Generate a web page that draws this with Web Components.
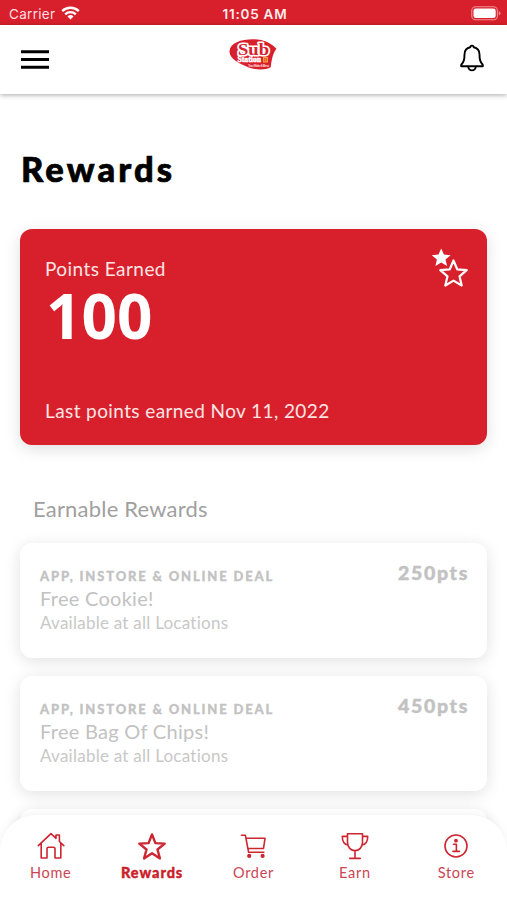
<!DOCTYPE html>
<html lang="en">
<head>
<meta charset="utf-8">
<title>Rewards</title>
<style>
    html, body {
        margin: 0;
        height: 100%;
        overflow: hidden;
        background: #fff;
    }

    body {
        font-family: Lato, "Open Sans", sans-serif;
        --brand: #d8202c;
    }
</style>
</head>
<body>
<rewards-app>
    <status-bar slot="top" carrier="Carrier" time="11:05 AM"></status-bar>
    <app-header slot="top"></app-header>

    <points-card label="Points Earned" points="100">Last points earned Nov 11, 2022</points-card>
    <reward-list heading="Earnable Rewards">
        <reward-card kind="APP, INSTORE &amp; ONLINE DEAL" name="Free Cookie!" cost="250pts">Available at all Locations</reward-card>
        <reward-card kind="APP, INSTORE &amp; ONLINE DEAL" name="Free Bag Of Chips!" cost="450pts">Available at all Locations</reward-card>
        <reward-card></reward-card>
    </reward-list>

    <tab-bar slot="bottom">
        <tab-item icon="home">Home</tab-item>
        <tab-item icon="star" active>Rewards</tab-item>
        <tab-item icon="cart">Order</tab-item>
        <tab-item icon="trophy">Earn</tab-item>
        <tab-item icon="info">Store</tab-item>
    </tab-bar>
</rewards-app>

<script>
const icons = {
    home: `<path d="M1.3 13.6 14 1.6l5 4.7V3h3.4v6.5l4.4 4.1M4.2 11v15h5.8v-9.2q0-1.6 1.6-1.6h4.8q1.6 0 1.6 1.6V26h5.8V11"/>`,
    star: `<path stroke-width="2.4" d="m14 2.4 3.4 8.7 9.3.5-7.2 5.9 2.4 8.9L14 21.3l-7.9 5.1 2.4-8.9-7.2-5.9 9.3-.5z"/>`,
    cart: `<path d="M2.400 3.300h4l3.200 17h15.200M7.100 6.300h18.900l-1.500 10.200H8.900"/><circle cx="10.200" cy="23.900" r="1.300" fill="currentColor"/><circle cx="23.600" cy="23.900" r="1.300" fill="currentColor"/>`,
    trophy: `<path d="M6.5 1.8h15v8.4c0 5.2-3.4 8.400-7.5 8.400s-7.5-3.200-7.5-8.400zM6.5 4.400H1.300c0 5 1.800 7.900 5.800 8.600M21.500 4.400h5.200c0 5-1.800 7.900-5.800 8.600M14 18.600v7.600M8.800 26.400h10.400"/>`,
    info: `<circle cx="14" cy="14" r="11"/><path d="M11.5 12.2h2.9v7M10.9 19.4h6.6"/><circle cx="14" cy="8.7" r="1.1" fill="currentColor"/>`,
};

function attach(element, html) {
    const template = document.createElement('template');
    template.innerHTML = html;
    element.attachShadow({ mode: 'open' }).appendChild(template.content.cloneNode(true));
}

class RewardsApp extends HTMLElement {
    constructor() {
        super();
        attach(this, `
            <style>
                :host {
                    position: relative;
                    display: flex;
                    flex-direction: column;
                    height: 900px;
                    overflow: hidden;
                }

                main {
                    flex: 1;
                    min-height: 0;
                    padding: 50px 20px 0;
                }

                h1 {
                    margin: 0 0 35px 1px;
                    font-size: 34.5px;
                    line-height: 50px;
                    font-weight: 900;
                    letter-spacing: 3.1px;
                    color: #000;
                    -webkit-text-stroke: .7px #000;
                }
            </style>
            <slot name="top"></slot>
            <main>
                <h1>Rewards</h1>
                <slot></slot>
            </main>
            <slot name="bottom"></slot>
        `);
    }
}

class StatusBar extends HTMLElement {
    constructor() {
        super();
        attach(this, `
            <style>
                :host {
                    display: grid;
                    grid-template-columns: 1fr auto 1fr;
                    align-items: center;
                    flex: none;
                    box-sizing: border-box;
                    height: 25px;
                    padding: 2px 6px 0 9px;
                    background: var(--brand);
                    color: #fff;
                    font: 13.5px/22px Inter, sans-serif;
                }

                .carrier {
                    display: flex;
                    align-items: center;
                    gap: 6px;
                    color: #ffdfe0;
                    letter-spacing: .3px;
                }

                .carrier svg {
                    margin-top: -2px;
                }

                .time {
                    font-size: 13.5px;
                    font-weight: 600;
                    letter-spacing: .75px;
                    color: #ffecec;
                }

                .battery {
                    justify-self: end;
                }

                svg {
                    display: block;
                }
            </style>
            <div class="carrier">
                <span id="carrier"></span>
                <svg width="19" height="14" viewBox="0 0 19 14" fill="none" stroke="#fff" stroke-width="2.4">
                    <path d="M1.2 5.2a11.8 11.8 0 0 1 16.6 0M4.2 8.3a7.6 7.6 0 0 1 10.6 0"/>
                    <path d="m9.5 13.6-3-3.1a4.3 4.3 0 0 1 6 0z" fill="#fff" stroke="none"/>
                </svg>
            </div>
            <span class="time" id="time"></span>
            <svg class="battery" width="30" height="15" viewBox="0 0 30 15">
                <rect x=".8" y=".8" width="25.6" height="13" rx="3.8" fill="none" stroke="#ef8f94" stroke-width="1.1"/>
                <rect x="2.5" y="2.5" width="22.2" height="9.6" rx="2.3" fill="#fff"/>
                <path d="M27.8 5.2q1.7.6 1.7 2.1t-1.7 2.1z" fill="#ef8f94"/>
            </svg>
        `);
    }

    connectedCallback() {
        this.shadowRoot.getElementById('carrier').textContent = this.getAttribute('carrier');
        this.shadowRoot.getElementById('time').textContent = this.getAttribute('time');
    }
}

class AppHeader extends HTMLElement {
    constructor() {
        super();
        attach(this, `
            <style>
                :host {
                    display: grid;
                    grid-template-columns: 1fr auto 1fr;
                    flex: none;
                    box-sizing: border-box;
                    height: 69px;
                    padding: 13px 23px 0 21px;
                    background: #fff;
                    box-shadow: 0 1px 5px rgba(0, 0, 0, .34);
                }

                svg {
                    display: block;
                }

                .menu {
                    margin-top: 11px;
                }

                .bell {
                    justify-self: end;
                    margin-top: 6px;
                }
            </style>
            <svg class="menu" width="28" height="20" viewBox="0 0 28 20" stroke="#000" stroke-width="3">
                <path d="M0 2.7h28M0 10.5h28M0 18.2h28"/>
            </svg>
            <svg width="48" height="34" viewBox="0 0 48 34">
                <path d="M.5 13C1 5 12 1.2 24 1.2c11 0 18 3.8 23.500 9.600-3 4-4.500 8-5.800 18.400-5 3-15 2.800-22 .3C11 26 0 21 .5 13z" fill="#d8202c"/>
                <text x="9" y="16.500" font-family="Liberation Serif, serif" font-weight="700" font-size="16.500" textLength="31" lengthAdjust="spacingAndGlyphs" fill="#d8202c" stroke="#fff" stroke-width="3.200" stroke-linejoin="round" paint-order="stroke">Sub</text>
                <text x="8.500" y="24.300" font-family="Liberation Serif, serif" font-weight="700" font-size="7.500" textLength="23.500" lengthAdjust="spacingAndGlyphs" fill="#fff" stroke="#fff" stroke-width=".5">Station</text>
                <rect x="34" y="19" width="5" height="5.500" fill="#f6a13a"/>
                <path d="M35.700 20v3.500M37.300 20v3.500" stroke="#d8202c" stroke-width=".6"/>
                <text x="19" y="29" font-family="Liberation Sans, sans-serif" font-weight="700" font-size="3.600" textLength="21" fill="#ffd0d0">You Make It Best</text>
            </svg>
            <svg class="bell" width="24" height="28" viewBox="0 0 24 28" fill="none" stroke="#000" stroke-width="1.900" stroke-linejoin="round">
                <path d="M10.300 3.200q0-1.600 1.700-1.600t1.700 1.600c3.900.8 5.800 3.600 5.800 7.200 0 5.400.6 7 3.300 10.500v1.300H1.200v-1.300c2.700-3.500 3.300-5.100 3.300-10.500 0-3.600 1.900-6.400 5.800-7.200z"/>
                <path d="M8.300 22.700a3.700 3.700 0 0 0 7.400 0"/>
            </svg>
        `);
    }
}

class PointsCard extends HTMLElement {
    constructor() {
        super();
        attach(this, `
            <style>
                :host {
                    display: flex;
                    justify-content: space-between;
                    box-sizing: border-box;
                    height: 216px;
                    padding: 19px 19px 21px 25px;
                    border-radius: 12px;
                    background: var(--brand);
                    color: #ffe4e4;
                    box-shadow: 0 4px 16px rgba(0, 0, 0, .13);
                    font-size: 19px;
                    line-height: 26px;
                }

                .text {
                    display: flex;
                    flex-direction: column;
                    padding-top: 8px;
                }

                .label {
                    letter-spacing: .45px;
                }

                .points {
                    margin-left: 1px;
                    font: 700 62px/66px "Open Sans", sans-serif;
                    color: #fff;
                }

                .last {
                    margin-top: auto;
                    letter-spacing: .4px;
                }
            </style>
            <div class="text">
                <span class="label"></span>
                <span class="points"></span>
                <span class="last"><slot></slot></span>
            </div>
            <svg width="37" height="40" viewBox="0 0 37 40">
                <path d="m10.200.5 2.700 6.100 6.700.6-5.100 4.400 1.600 6.500-5.900-3.500-5.800 3.500 1.500-6.500-5.100-4.400 6.700-.6z" fill="#fff"/>
                <path d="m22.500 12.500 3.700 8.800 9.500.8-7.200 6.200 2.200 9.200-8.200-4.900-8.200 4.900 2.200-9.200-7.200-6.200 9.500-.8z" fill="#d8202c" stroke="#fff" stroke-width="2.200" stroke-linejoin="round"/>
            </svg>
        `);
    }

    connectedCallback() {
        this.shadowRoot.querySelector('.label').textContent = this.getAttribute('label');
        this.shadowRoot.querySelector('.points').textContent = this.getAttribute('points');
    }
}

class RewardList extends HTMLElement {
    constructor() {
        super();
        attach(this, `
            <style>
                :host {
                    display: flex;
                    flex-direction: column;
                    gap: 18px;
                    padding-top: 49px;
                }

                h2 {
                    margin: 0 0 1px 13px;
                    font-size: 22px;
                    line-height: 30px;
                    font-weight: 400;
                    letter-spacing: .2px;
                    color: #a0a0a0;
                }
            </style>
            <h2></h2>
            <slot></slot>
        `);
    }

    connectedCallback() {
        this.shadowRoot.querySelector('h2').textContent = this.getAttribute('heading');
    }
}

class RewardCard extends HTMLElement {
    constructor() {
        super();
        attach(this, `
            <style>
                :host {
                    display: flex;
                    justify-content: space-between;
                    flex: none;
                    box-sizing: border-box;
                    height: 115px;
                    padding: 18px 18px 0 20px;
                    border-radius: 12px;
                    background: #fff;
                    color: #c2c2c2;
                    box-shadow: 0 3px 16px rgba(0, 0, 0, .12);
                }

                .text {
                    display: flex;
                    flex-direction: column;
                    padding-top: 5px;
                }

                .kind {
                    font-size: 13px;
                    line-height: 20px;
                    font-weight: 900;
                    letter-spacing: 1.83px;
                    -webkit-text-stroke: .3px;
                }

                .name {
                    font-size: 20px;
                    line-height: 25px;
                    letter-spacing: .28px;
                }

                .place {
                    font-size: 17px;
                    line-height: 23px;
                    letter-spacing: .25px;
                    color: #c8c8c8;
                }

                .cost {
                    font-size: 19.5px;
                    line-height: 24px;
                    font-weight: 900;
                    letter-spacing: 1.7px;
                    -webkit-text-stroke: .4px;
                }
            </style>
            <div class="text">
                <span class="kind"></span>
                <span class="name"></span>
                <span class="place"><slot></slot></span>
            </div>
            <span class="cost"></span>
        `);
    }

    connectedCallback() {
        for (const field of ['kind', 'name', 'cost']) {
            this.shadowRoot.querySelector('.' + field).textContent = this.getAttribute(field) ?? '';
        }
    }
}

class TabBar extends HTMLElement {
    constructor() {
        super();
        attach(this, `
            <style>
                :host {
                    position: absolute;
                    left: 0;
                    right: 0;
                    bottom: 0;
                    display: grid;
                    grid-template-columns: repeat(5, 1fr);
                    box-sizing: border-box;
                    height: 85px;
                    padding-top: 17px;
                    border-radius: 36px 36px 0 0;
                    background: #fff;
                    box-shadow: 0 -1px 8px rgba(0, 0, 0, .06);
                }
            </style>
            <slot></slot>
        `);
    }
}

class TabItem extends HTMLElement {
    constructor() {
        super();
        attach(this, `
            <style>
                :host {
                    display: flex;
                    flex-direction: column;
                    align-items: center;
                    color: #cc4453;
                    font-size: 14.5px;
                    line-height: 20px;
                    letter-spacing: .7px;
                }

                :host([active]) {
                    color: #cb1f2d;
                    font-weight: 900;
                    letter-spacing: .95px;
                    -webkit-text-stroke: .4px;
                }

                svg {
                    display: block;
                    margin-bottom: 3px;
                    color: #cb2632;
                }
            </style>
            <svg width="28" height="28" viewBox="0 0 28 28" fill="none" stroke="currentColor" stroke-width="1.600" stroke-linejoin="round" stroke-linecap="round"></svg>
            <span><slot></slot></span>
        `);
    }

    connectedCallback() {
        this.shadowRoot.querySelector('svg').innerHTML = icons[this.getAttribute('icon')];
    }
}

customElements.define('rewards-app', RewardsApp);
customElements.define('status-bar', StatusBar);
customElements.define('app-header', AppHeader);
customElements.define('points-card', PointsCard);
customElements.define('reward-list', RewardList);
customElements.define('reward-card', RewardCard);
customElements.define('tab-bar', TabBar);
customElements.define('tab-item', TabItem);
</script>
</body>
</html>
